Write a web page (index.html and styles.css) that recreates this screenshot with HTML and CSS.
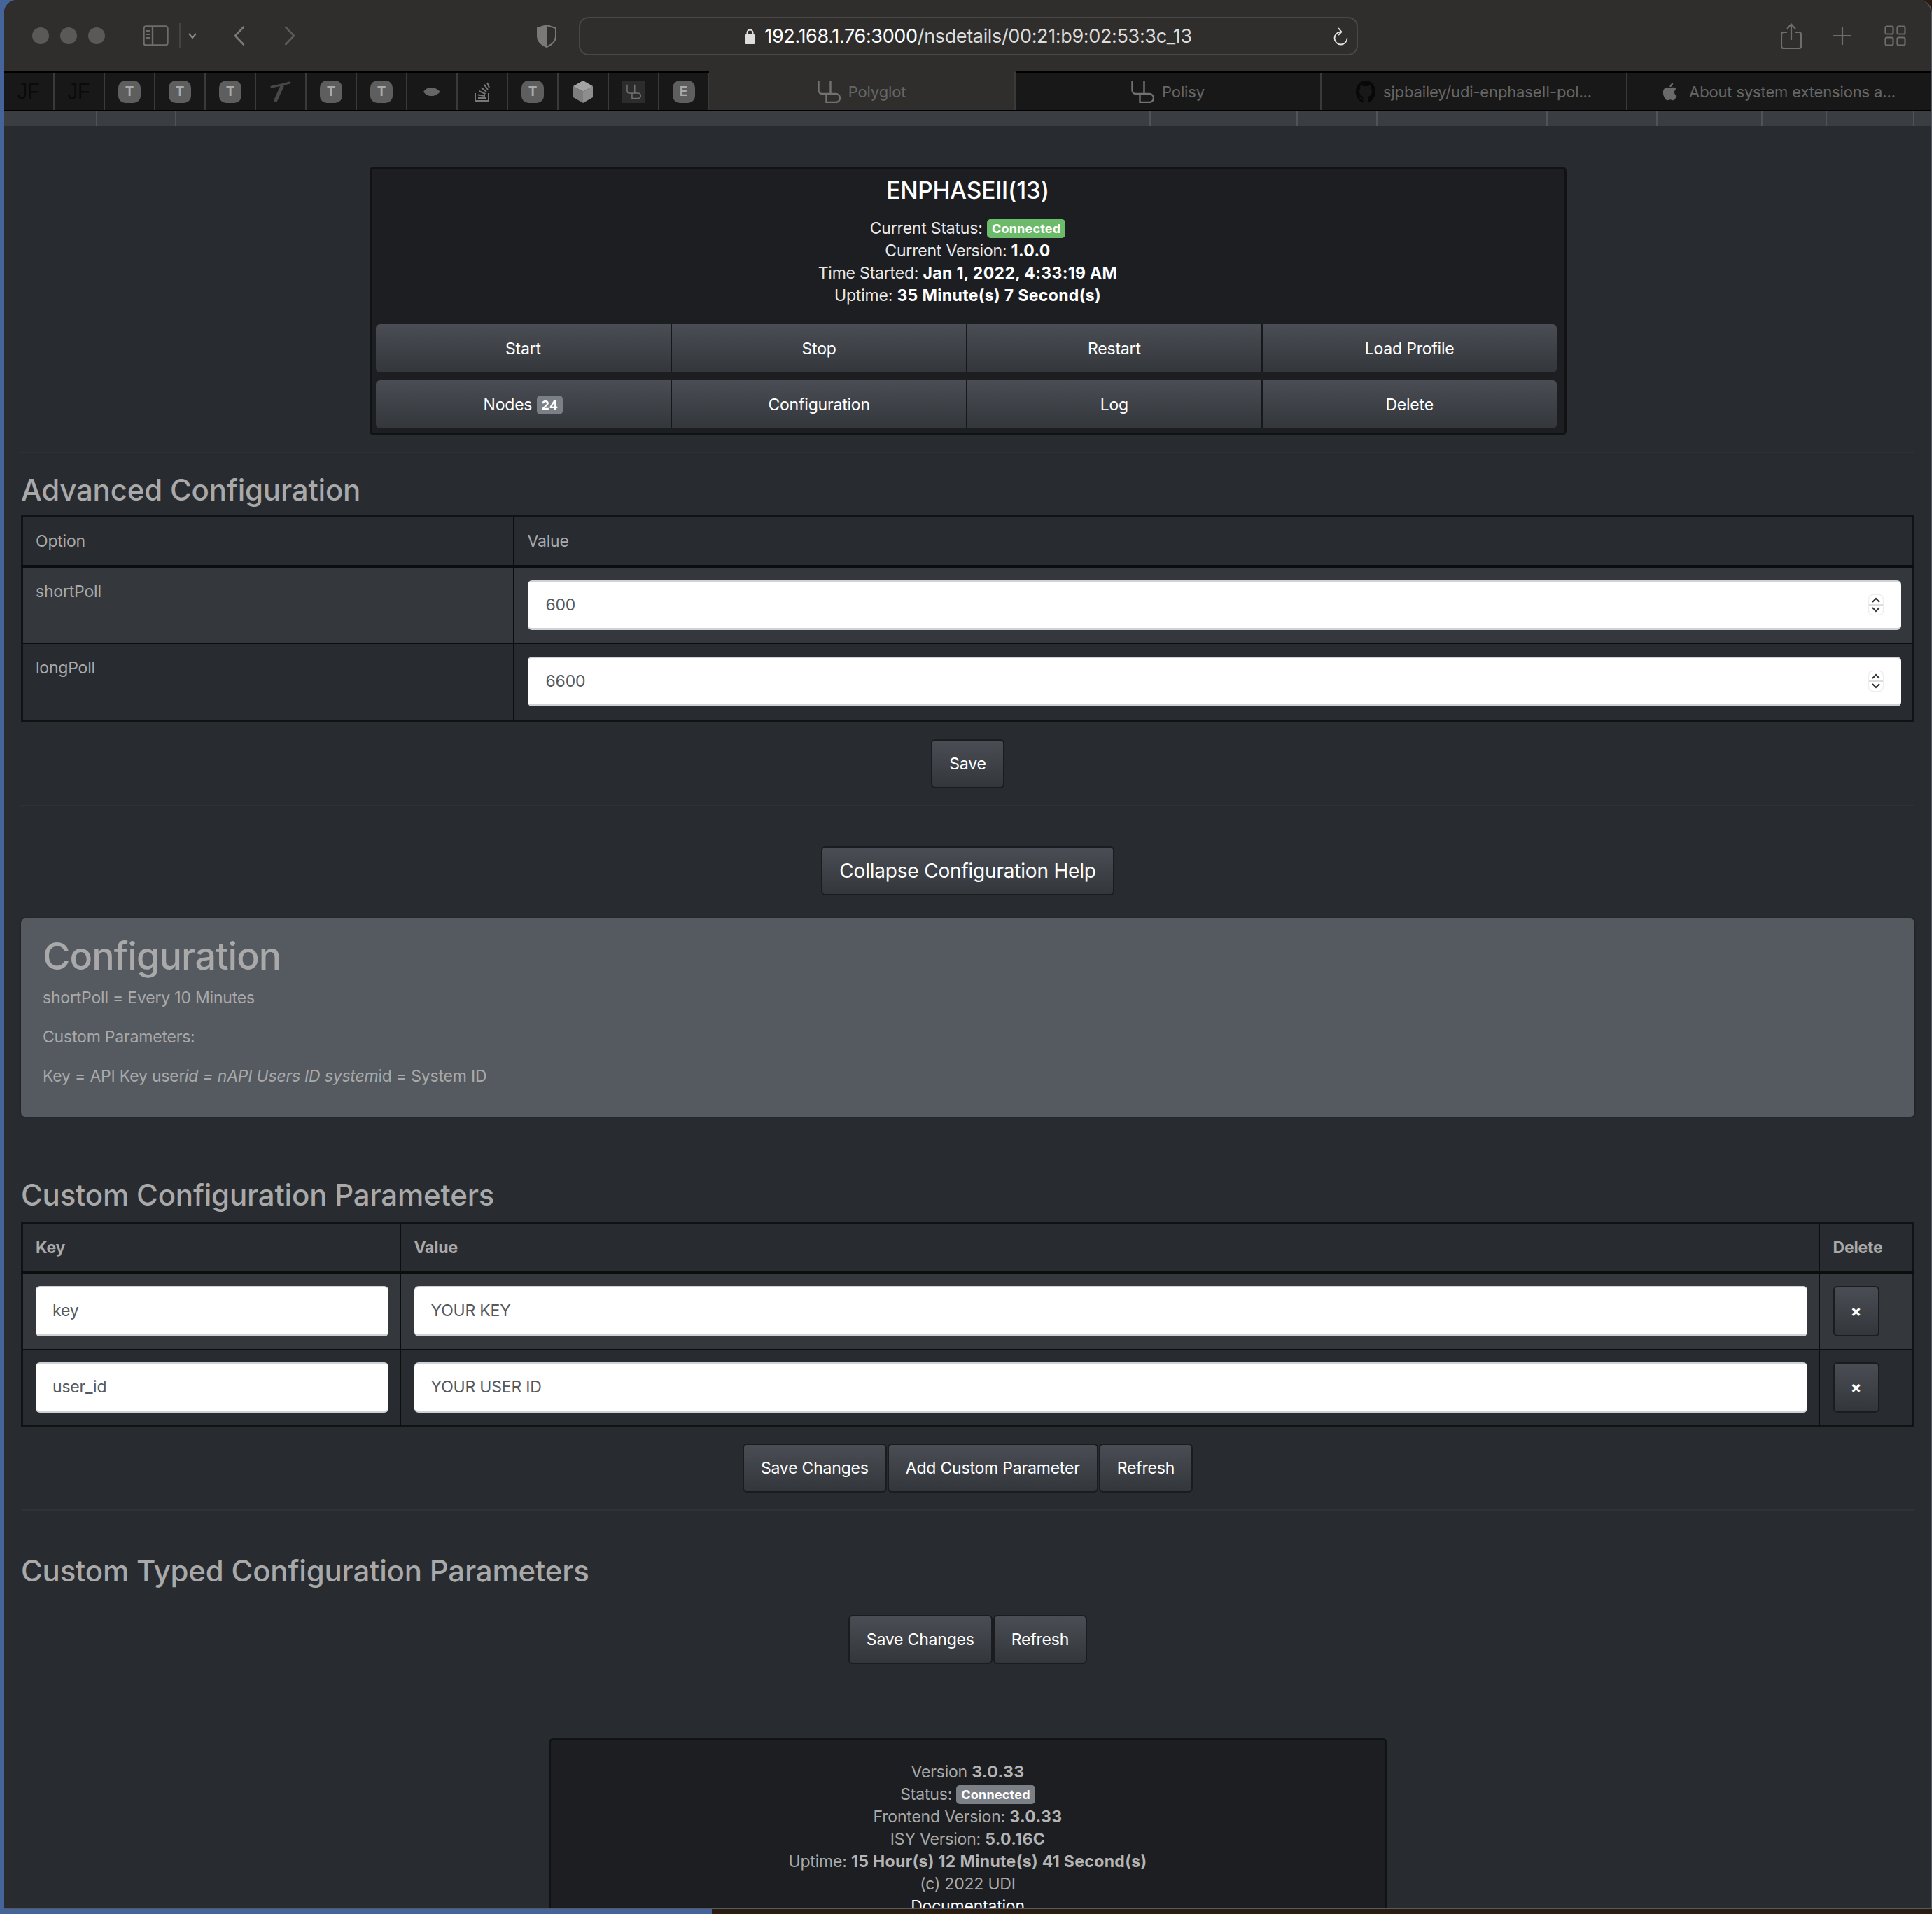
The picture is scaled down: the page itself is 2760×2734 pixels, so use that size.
FILE: index.html
```html
<!DOCTYPE html>
<html lang="en">

<head>
    <meta charset="UTF-8">
    <title>Polyglot</title>
    <link rel="stylesheet" href="styles.css">
</head>

<body>
    <svg class="defs" width="0" height="0">
        <symbol id="ud" viewBox="0 0 33 32">
            <path d="M1.500 0V14a5 5 0 0 0 5 5H26a6 6 0 0 1 0 12H12.500V19M18.500 0V19" fill="none" stroke="currentColor" stroke-width="2.400" />
        </symbol>
    </svg>

    <div class="window">
        <header class="toolbar">
            <span class="light light-first"></span>
            <span class="light"></span>
            <span class="light"></span>
            <svg class="ic-sidebar" width="37" height="30" viewBox="0 0 37 30" fill="none" stroke="#6e6d6b" stroke-width="2.400">
                <rect x="1.500" y="1.500" width="34" height="27" rx="3" />
                <path d="M14 1.500V28.500" />
                <path d="M5 8H10M5 13H10M5 18H10" stroke-width="2.200" />
            </svg>
            <span class="ic-sep"></span>
            <svg class="ic-drop" width="12" height="8" viewBox="0 0 12 8" fill="none" stroke="#8a8987" stroke-width="2">
                <path d="M1 1L6 7L11 1" />
            </svg>
            <svg class="ic-back" width="16" height="28" viewBox="0 0 16 28" fill="none" stroke="#7c7b79" stroke-width="2.600">
                <path d="M14.500 1L2 14L14.500 27" />
            </svg>
            <svg class="ic-forward" width="16" height="28" viewBox="0 0 16 28" fill="none" stroke="#5c5b59" stroke-width="2.600">
                <path d="M1.500 1L14 14L1.500 27" />
            </svg>
            <svg class="ic-shield" width="28" height="33" viewBox="0 0 28 33">
                <path d="M14 1L27 5V17C27 24 21 29 14 32C7 29 1 24 1 17V5Z" fill="none" stroke="#7a7977" stroke-width="2" />
                <path d="M14 1L1 5V17C1 24 7 29 14 32Z" fill="#7a7977" />
            </svg>
            <div class="urlbar">
                <svg width="15" height="23" viewBox="0 0 15 23">
                    <path d="M3.500 10V6.500a4 4 0 0 1 8 0V10" fill="none" stroke="#dedede" stroke-width="2" />
                    <rect x="0" y="9" width="15" height="14" rx="2" fill="#dedede" />
                </svg>
                <span class="url-text"><span class="url-host">192.168.1.76:3000</span>/nsdetails/00:21:b9:02:53:3c_13</span>
                <svg class="reload" width="22" height="26" viewBox="0 0 22 26" fill="none" stroke="#e4e4e4" stroke-width="1.800">
                    <path d="M11.500 6.500A9 9 0 1 0 20.500 15.500" />
                    <path d="M8 1L12.500 6.500L8 11" />
                </svg>
            </div>
            <svg class="ic-share" width="30" height="37" viewBox="0 0 30 37" fill="none" stroke="#6e6d6b" stroke-width="2.200">
                <path d="M9 13H4a3 3 0 0 0-3 3V33a3 3 0 0 0 3 3H26a3 3 0 0 0 3-3V16a3 3 0 0 0-3-3H21" />
                <path d="M15 24V2M9 8L15 1.500L21 8" />
            </svg>
            <svg class="ic-plus" width="26" height="26" viewBox="0 0 26 26" stroke="#6e6d6b" stroke-width="2.200">
                <path d="M13 0V26M0 13H26" />
            </svg>
            <svg class="ic-grid" width="31" height="30" viewBox="0 0 31 30" fill="none" stroke="#6e6d6b" stroke-width="2.200">
                <rect x="1.500" y="1.500" width="11" height="11" rx="2" />
                <rect x="18.500" y="1.500" width="11" height="11" rx="2" />
                <rect x="1.500" y="17.500" width="11" height="11" rx="2" />
                <rect x="18.500" y="17.500" width="11" height="11" rx="2" />
            </svg>
        </header>

        <div class="tabs">
            <div class="pin"><span class="pin-jf">JF</span></div>
            <div class="pin"><span class="pin-jf">JF</span></div>
            <div class="pin"><span class="pin-badge">T</span></div>
            <div class="pin"><span class="pin-badge">T</span></div>
            <div class="pin"><span class="pin-badge">T</span></div>
            <div class="pin">
                <svg class="ic-slant" width="30" height="30" viewBox="0 0 30 30" fill="none" stroke="#484848" stroke-linecap="round">
                    <path d="M2 8Q14 6 28 2" stroke-width="3" />
                    <path d="M17 7L8 27" stroke-width="5" />
                </svg>
            </div>
            <div class="pin"><span class="pin-badge">T</span></div>
            <div class="pin"><span class="pin-badge">T</span></div>
            <div class="pin">
                <svg width="24" height="12" viewBox="0 0 24 12"><path d="M0 6C4 0 9 0 12 0C16 0 20 2 24 6C20 10 16 12 12 12C9 12 4 12 0 6Z" fill="#666" /></svg>
            </div>
            <div class="pin">
                <svg width="22" height="28" viewBox="0 0 22 28" fill="none" stroke="#777" stroke-width="2">
                    <path d="M1 16V27H20V16" />
                    <path d="M5 23H16M5 18.500L15 20M6.500 13L15.500 17M9.500 8L17 14M13.500 3.500L19 11M18 1L21 8" />
                </svg>
            </div>
            <div class="pin"><span class="pin-badge">T</span></div>
            <div class="pin">
                <svg width="32" height="32" viewBox="0 0 32 32">
                    <path d="M16 0L30 8L16 16L2 8Z" fill="#a3a3a3" />
                    <path d="M2 8L16 16V32L2 24Z" fill="#7d7d7d" />
                    <path d="M30 8L16 16V32L30 24Z" fill="#8e8e8e" />
                </svg>
            </div>
            <div class="pin">
                <span class="pin-ud"><svg width="21" height="22"><use href="#ud" /></svg></span>
            </div>
            <div class="pin"><span class="pin-badge">E</span></div>
            <div class="tab tab-active">
                <svg class="tab-ud" width="33" height="32"><use href="#ud" /></svg>
                <span>Polyglot</span>
            </div>
            <div class="tab">
                <svg class="tab-ud" width="33" height="32"><use href="#ud" /></svg>
                <span>Polisy</span>
            </div>
            <div class="tab">
                <svg width="28" height="32" viewBox="0 0 16 16" preserveAspectRatio="none"><path fill="#080808" d="M8 0C3.580 0 0 3.580 0 8c0 3.540 2.290 6.530 5.470 7.590.4.070.55-.17.55-.38 0-.19-.01-.82-.01-1.490-2.010.37-2.530-.49-2.690-.94-.09-.23-.48-.94-.82-1.130-.28-.15-.68-.52-.01-.53.63-.01 1.080.58 1.230.82.72 1.210 1.870.87 2.330.66.070-.52.280-.87.510-1.070-1.780-.2-3.640-.89-3.640-3.950 0-.87.310-1.590.82-2.150-.08-.2-.36-1.020.08-2.120 0 0 .67-.21 2.200.82.64-.18 1.320-.27 2-.27s1.360.09 2 .27c1.530-1.040 2.200-.82 2.200-.82.44 1.100.16 1.920.08 2.120.51.56.82 1.270.82 2.150 0 3.070-1.870 3.750-3.650 3.950.29.25.54.73.54 1.480 0 1.070-.01 1.930-.01 2.200 0 .21.15.46.55.38A8.013 8.013 0 0016 8c0-4.420-3.580-8-8-8z" /></svg>
                <span>sjpbailey/udi-enphaseII-pol...</span>
            </div>
            <div class="tab tab-last">
                <svg width="22" height="26" viewBox="4 1 19 22" preserveAspectRatio="none"><path fill="#6a6a6a" d="M18.700 12.600c0-2.600 2.100-3.800 2.200-3.900-1.200-1.800-3.100-2-3.700-2-1.600-.2-3.100.9-3.900.9-.8 0-2.100-.9-3.400-.9-1.700 0-3.400 1-4.300 2.600-1.800 3.200-.5 7.900 1.300 10.500.9 1.300 1.900 2.700 3.300 2.600 1.300-.1 1.800-.9 3.400-.9 1.600 0 2 .9 3.400.8 1.400 0 2.300-1.300 3.200-2.500 1-1.500 1.400-2.900 1.400-3-.1 0-2.900-1.100-2.900-4.200zM16 4.900c.7-.9 1.200-2.100 1.100-3.300-1 0-2.300.7-3 1.500-.7.8-1.200 2-1.100 3.200 1.200.1 2.300-.6 3-1.400z" /></svg>
                <span>About system extensions a...</span>
            </div>
        </div>

        <div class="strip">
            <span></span><span></span><span></span><span></span><span></span><span></span><span></span><span></span><span></span><span></span><span></span>
        </div>

        <main class="page">
            <section class="card ns-card">
                <h3 class="card-title">ENPHASEII(13)</h3>
                <div class="status-lines">
                    <div>Current Status: <span class="badge badge-green">Connected</span></div>
                    <div>Current Version: <b>1.0.0</b></div>
                    <div>Time Started: <b>Jan 1, 2022, 4:33:19 AM</b></div>
                    <div>Uptime: <b>35 Minute(s) 7 Second(s)</b></div>
                </div>
                <div class="btn-grid">
                    <button>Start</button>
                    <button>Stop</button>
                    <button>Restart</button>
                    <button>Load Profile</button>
                </div>
                <div class="btn-grid btn-grid-second">
                    <button>Nodes <span class="badge badge-grey">24</span></button>
                    <button>Configuration</button>
                    <button>Log</button>
                    <button>Delete</button>
                </div>
            </section>

            <hr class="rule rule-first">
            <h2 class="heading heading-adv">Advanced Configuration</h2>
            <table class="grid-table adv-table">
                <thead>
                    <tr>
                        <th>Option</th>
                        <th>Value</th>
                    </tr>
                </thead>
                <tbody>
                    <tr>
                        <td>shortPoll</td>
                        <td>
                            <div class="number-field">
                                <input type="text" value="600">
                                <span class="spinner"><svg width="20" height="28" viewBox="0 0 20 28" fill="none" stroke="#333" stroke-width="2"><path d="M5 10L10 5L15 10M5 18L10 23L15 18" /></svg></span>
                            </div>
                        </td>
                    </tr>
                    <tr>
                        <td>longPoll</td>
                        <td>
                            <div class="number-field">
                                <input type="text" value="6600">
                                <span class="spinner"><svg width="20" height="28" viewBox="0 0 20 28" fill="none" stroke="#333" stroke-width="2"><path d="M5 10L10 5L15 10M5 18L10 23L15 18" /></svg></span>
                            </div>
                        </td>
                    </tr>
                </tbody>
            </table>
            <div class="btn-row btn-row-save"><button class="btn">Save</button></div>
            <hr class="rule">
            <div class="btn-row btn-row-collapse"><button class="btn btn-large">Collapse Configuration Help</button></div>

            <div class="jumbotron">
                <h1>Configuration</h1>
                <p>shortPoll = Every 10 Minutes</p>
                <p>Custom Parameters:</p>
                <p>Key = API Key user<em>id = nAPI Users ID system</em>id = System ID</p>
            </div>

            <h2 class="heading heading-custom">Custom Configuration Parameters</h2>
            <table class="grid-table custom-table">
                <thead>
                    <tr>
                        <th>Key</th>
                        <th>Value</th>
                        <th>Delete</th>
                    </tr>
                </thead>
                <tbody>
                    <tr>
                        <td><input type="text" value="key"></td>
                        <td><input type="text" value="YOUR KEY"></td>
                        <td><button class="btn btn-x">×</button></td>
                    </tr>
                    <tr>
                        <td><input type="text" value="user_id"></td>
                        <td><input type="text" value="YOUR USER ID"></td>
                        <td><button class="btn btn-x">×</button></td>
                    </tr>
                </tbody>
            </table>
            <div class="btn-row btn-row-custom">
                <button class="btn">Save Changes</button>
                <button class="btn">Add Custom Parameter</button>
                <button class="btn">Refresh</button>
            </div>
            <hr class="rule">
            <h2 class="heading heading-typed">Custom Typed Configuration Parameters</h2>
            <div class="btn-row btn-row-typed">
                <button class="btn">Save Changes</button>
                <button class="btn">Refresh</button>
            </div>

            <footer class="card foot-card">
                <div>Version <b>3.0.33</b></div>
                <div>Status: <span class="badge badge-grey">Connected</span></div>
                <div>Frontend Version: <b>3.0.33</b></div>
                <div>ISY Version: <b>5.0.16C</b></div>
                <div>Uptime: <b>15 Hour(s) 12 Minute(s) 41 Second(s)</b></div>
                <div>(c) 2022 UDI</div>
                <div class="doc-link">Documentation</div>
            </footer>
        </main>
    </div>
</body>

</html>
```

FILE: styles.css
```css
html,
body {
    margin: 0;
    height: 2734px;
    overflow: hidden;
}

body {
    font-family: Inter, "Liberation Sans", sans-serif;
    font-size: 23px;
    letter-spacing: -.2px;
    background: linear-gradient(to right, #45659a 1017px, #2a1c10 1017px);
}

.defs {
    display: block;
    height: 0;
}

.window {
    margin-left: 6px;
    width: 2752px;
    height: 2725px;
    overflow: hidden;
    background: #282b30;
    border-right: 2px solid #565a60;
    border-bottom: 2px solid #565a60;
    border-radius: 18px 18px 0 0;
}

/* browser chrome */
.toolbar {
    display: flex;
    align-items: center;
    height: 102px;
    background: #2f2e2c;
    box-sizing: border-box;
}

.toolbar > svg {
    flex: none;
}

.light {
    width: 24px;
    height: 24px;
    margin-left: 16px;
    border-radius: 50%;
    background: #5a5957;
}

.light-first {
    margin-left: 40px;
}

.ic-sidebar { margin-left: 54px; }
.ic-sep { margin-left: 15px; width: 2px; height: 36px; background: #454442; }
.ic-drop { margin-left: 11px; }
.ic-back { margin-left: 53px; }
.ic-forward { margin-left: 56px; }
.ic-shield { margin-left: 345px; }
.ic-share { margin-left: 604px; }
.ic-plus { margin-left: 45px; }
.ic-grid { margin-left: 47px; }

.urlbar {
    position: relative;
    display: flex;
    justify-content: center;
    align-items: center;
    gap: 13px;
    flex: none;
    box-sizing: border-box;
    width: 1113px;
    height: 55px;
    margin-left: 32px;
    border: 2px solid #494846;
    border-radius: 14px;
    color: #dcdcdc;
    font-size: 27px;
    letter-spacing: -.35px;
}

.url-host {
    color: #fff;
}

.reload {
    position: absolute;
    right: 12px;
    top: 13px;
}

.tabs {
    display: flex;
    height: 57px;
    box-sizing: border-box;
    background: #181818;
    border-top: 2px solid #000;
    border-bottom: 2px solid #000;
    color: #666;
}

.pin {
    display: flex;
    justify-content: center;
    align-items: center;
    flex: none;
    box-sizing: border-box;
    width: 72px;
    border-right: 2px solid #3a3a3a;
}

.pin:nth-child(14) {
    width: 71px;
}

.pin-jf {
    color: #0b0b0b;
    font-family: "Liberation Sans", sans-serif;
    font-size: 34px;
    transform: scaleX(.85);
}

.pin-badge {
    width: 32px;
    height: 32px;
    border-radius: 10px;
    background: #5e5e5e;
    color: #a9a9a9;
    font-size: 19px;
    font-weight: 700;
    line-height: 32px;
    text-align: center;
}

.ic-slant {
    filter: blur(.6px);
}

.pin-ud {
    display: flex;
    justify-content: center;
    align-items: center;
    width: 32px;
    height: 32px;
    background: #2c2c2c;
    color: #707070;
}

.tab {
    display: flex;
    justify-content: center;
    align-items: center;
    gap: 11px;
    flex: none;
    box-sizing: border-box;
    width: 437px;
    border-right: 2px solid #3a3a3a;
    font-size: 22px;
    letter-spacing: -.15px;
    white-space: nowrap;
}

.tab-ud {
    color: #727272;
}

.tab-active {
    width: 438px;
    margin-top: -2px;
    background: #2f2e2c;
    border-top: 2px solid #2f2e2c;
}

.tab-last {
    flex: 1;
    width: auto;
    gap: 16px;
    border-right: 0;
}

.strip {
    display: grid;
    grid-template-columns: 133px 113px 1392px 210px 114px 243px 157px 150px 92px 125px 1fr;
    height: 21px;
    background: #3a3e43;
}

.strip span {
    border-right: 2px solid #50545a;
}

.strip span:last-child {
    border-right: 0;
}

/* page */
.page {
    padding: 58px 23px 0 24px;
    color: #a9a9a9;
}

.card {
    box-sizing: border-box;
    margin: 0 auto;
    background: #1c1e22;
    border: 3px solid #111214;
    border-radius: 6px;
}

.ns-card {
    width: 1710px;
    height: 384px;
    padding-top: 11px;
    color: #e8e8e8;
    text-align: center;
}

.card-title {
    margin: 0 0 18px;
    color: #fff;
    font-size: 33.500px;
    font-weight: 500;
    line-height: 40px;
}

.status-lines {
    line-height: 32px;
    margin-bottom: 25px;
}

b {
    font-weight: 700;
    letter-spacing: .35px;
}

.status-lines b {
    color: #fff;
}

.badge {
    display: inline-block;
    box-sizing: border-box;
    height: 27px;
    padding: 0 7px;
    border-radius: 5px;
    color: #fff;
    font-size: 18px;
    font-weight: 700;
    letter-spacing: .2px;
    line-height: 27px;
    vertical-align: 1px;
}

.badge-green {
    background: #6cbb6a;
}

.badge-grey {
    background: #7b7f86;
}

.btn-grid {
    display: grid;
    grid-template-columns: repeat(4, 1fr);
    height: 69px;
    margin: 0 11px 0 6px;
    border-radius: 6px;
    overflow: hidden;
}

.btn-grid-second {
    margin-top: 11px;
}

.btn-grid button {
    border: 0;
    border-left: 2px solid #16181b;
    background: linear-gradient(#4a4e54, #33363b);
    color: #fff;
    font: inherit;
    letter-spacing: inherit;
}

.btn-grid button:first-child {
    border-left: 0;
}

.rule {
    margin: 24px 0 0;
    border: 0;
    border-top: 2px solid #2f3237;
}

.rule-first {
    margin-top: 23px;
}

.heading {
    margin: 0 0 13px;
    color: #a9a9a9;
    font-size: 42px;
    font-weight: 500;
    letter-spacing: -.2px;
    line-height: 50px;
}

.heading-adv {
    margin-top: 28px;
    margin-bottom: 11px;
}

.heading-custom {
    margin-top: 87px;
}

.heading-typed {
    margin-top: 61px;
    margin-bottom: 0;
}

.grid-table {
    width: 100%;
    border-collapse: collapse;
    table-layout: fixed;
    border: 3px solid #111214;
}

.grid-table th,
.grid-table td {
    box-sizing: border-box;
    padding: 0 16px 0 19px;
    border: 2px solid #0c0d0f;
    font-weight: 400;
    text-align: left;
    vertical-align: top;
}

.grid-table th {
    height: 70px;
    border-bottom-width: 4px;
    line-height: 68px;
}

.grid-table td {
    height: 110px;
    padding-top: 18px;
    padding-bottom: 18px;
}

.grid-table th:first-child,
.grid-table td:first-child {
    padding-left: 18px;
}

.grid-table tbody tr:first-child {
    background: #34373c;
}

.adv-table th:first-child { width: 702px; }
.adv-table td:first-child { line-height: 36px; padding-top: 16px; }
.adv-table input { padding-left: 26px; }

.custom-table th { font-weight: 700; }
.custom-table th:first-child { width: 540px; }
.custom-table th:last-child { width: 135px; }
.custom-table td { padding-top: 17px; padding-bottom: 17px; }
.custom-table input { height: 72px; }

input {
    display: block;
    box-sizing: border-box;
    width: 100%;
    height: 71px;
    padding: 0 24px;
    border: 0;
    border-top: 2px solid #ced1d5;
    border-bottom: 3px solid #ced1d5;
    border-radius: 6px;
    background: #fff;
    color: #55595e;
    font: inherit;
    letter-spacing: inherit;
}

.number-field {
    position: relative;
}

.spinner {
    position: absolute;
    right: 26px;
    top: 21px;
    width: 20px;
    height: 28px;
    border-radius: 6px;
    box-shadow: 0 0 2px #bbb;
    background: linear-gradient(#ddd, #ddd) center / 100% 2px no-repeat;
}

.spinner svg {
    display: block;
}

.btn-row {
    display: flex;
    justify-content: center;
    gap: 1px;
}

.btn-row-save { margin-top: 25px; }
.btn-row-collapse { margin-top: 57px; }
.btn-row-custom { margin-top: 23px; }
.btn-row-typed { margin-top: 38px; }

.btn {
    box-sizing: border-box;
    height: 70px;
    padding: 0 24px;
    border: 2px solid #1a1c1f;
    border-radius: 6px;
    background: linear-gradient(#4a4e54, #33363b);
    color: #fff;
    font: inherit;
    letter-spacing: inherit;
}

.btn-large {
    font-size: 28px;
}

.btn-x {
    display: block;
    width: 66px;
    height: 72px;
    padding: 0;
    font-weight: 700;
}

.jumbotron {
    box-sizing: border-box;
    height: 283px;
    margin-top: 33px;
    padding: 23px 31px 0;
    background: #555a61;
    border-radius: 6px;
    box-shadow: 0 0 3px #1a1c1f;
}

.jumbotron h1 {
    margin: 0 0 12px;
    font-size: 54px;
    font-weight: 500;
    letter-spacing: -1px;
    line-height: 62px;
}

.jumbotron p {
    margin: 0 0 24px;
    line-height: 32px;
}

.foot-card {
    width: 1198px;
    height: 400px;
    margin-top: 106px;
    padding-top: 29px;
    line-height: 32px;
    text-align: center;
}

.foot-card b {
    color: #b4b4b4;
}

.doc-link {
    color: #fff;
}
```
